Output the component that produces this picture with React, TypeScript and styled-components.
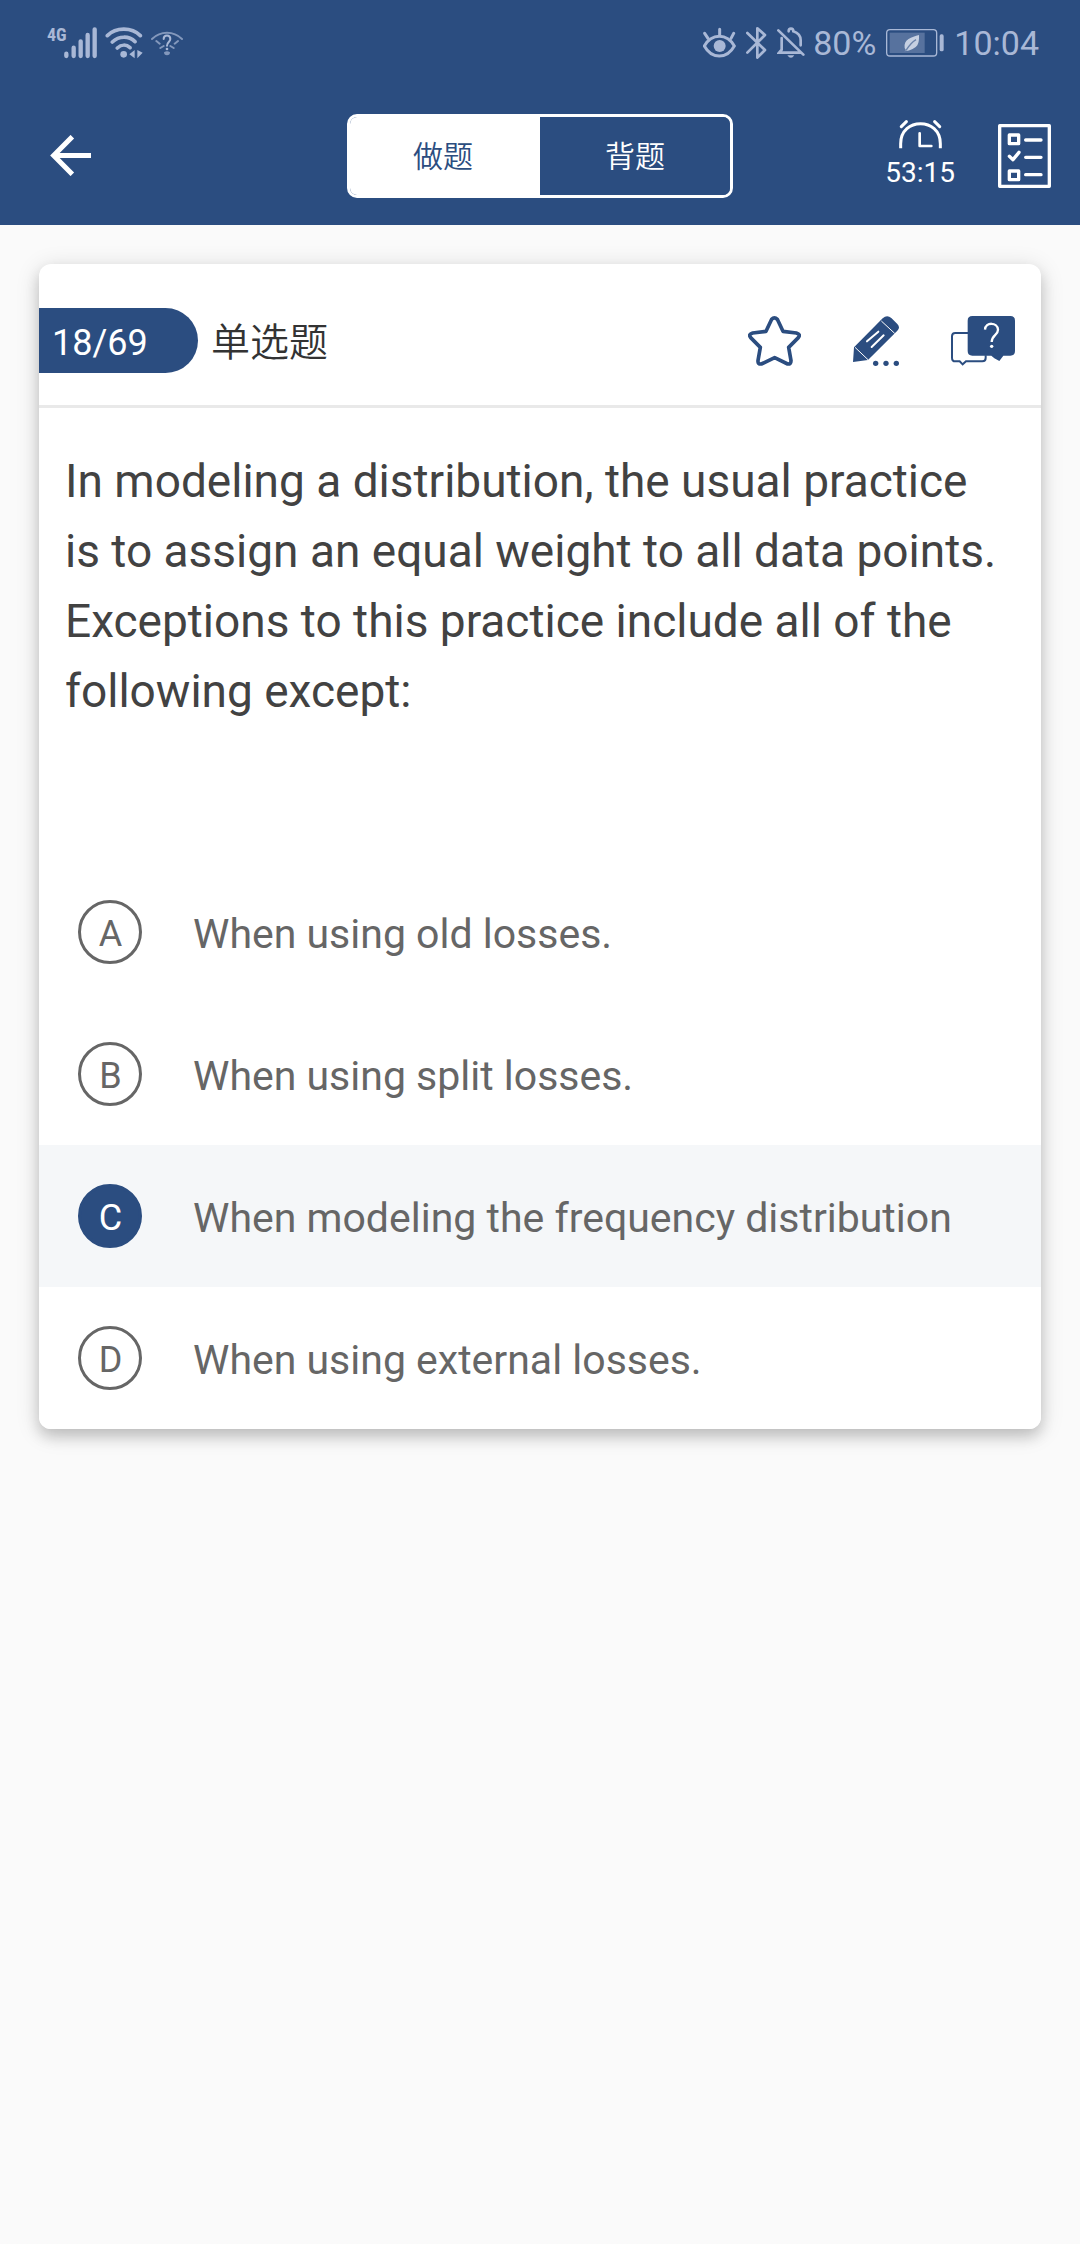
import React, { useState } from "react";
import styled, { createGlobalStyle } from "styled-components";

const navy = "#2b4d80";
const statusTint = "#a9b8d6";
const latin = 'Roboto, "Noto Sans CJK SC", sans-serif';

const GlobalStyle = createGlobalStyle`
  *, *::before, *::after { box-sizing: border-box; }
  body { margin: 0; background: #fafafa; font-family: ${latin}; }
  button { font: inherit; color: inherit; background: none; border: 0; padding: 0; cursor: pointer; }
  svg { display: block; flex: none; }
`;

const Header = styled.header`
  background: ${navy};
  color: #fff;
`;

const StatusBar = styled.div`
  display: flex;
  justify-content: space-between;
  align-items: center;
  height: 86px;
  padding: 0 41px 0 47px;
  color: ${statusTint};
  font-size: 34px;
  line-height: 40px;
`;

const StatusGroup = styled.div<{ $gap: number }>`
  display: flex;
  align-items: center;
  gap: ${(p) => p.$gap}px;
`;

const Signal = styled.div`
  display: flex;
  align-items: flex-start;
`;

const NetworkType = styled.span`
  width: 17px;
  font: 700 18px/16px "Roboto Condensed", "Liberation Sans Narrow", Roboto, sans-serif;
`;

const Toolbar = styled.nav`
  display: grid;
  grid-template-columns: 1fr auto 1fr;
  align-items: center;
  height: 139px;
  padding: 0 29px 0 50px;
`;

const BackButton = styled.button`
  justify-self: start;
`;

const Segments = styled.div`
  display: flex;
  height: 84px;
  margin-right: 21px;
  border: 3px solid #fff;
  border-radius: 10px;
  overflow: hidden;
`;

const Segment = styled.button<{ $active: boolean }>`
  width: 190px;
  padding-bottom: 4px;
  font-size: 30px;
  font-weight: 350;
  background: ${(p) => (p.$active ? "#fff" : navy)};
  color: ${(p) => (p.$active ? navy : "#fff")};

  &:first-child {
    padding-right: 4px;
  }
`;

const ToolbarEnd = styled.div`
  display: flex;
  justify-self: end;
  align-items: center;
  gap: 43px;
`;

const Timer = styled.div`
  display: flex;
  flex-direction: column;
  align-items: center;
  gap: 6px;
  font-size: 28px;
  line-height: 36px;
`;

const Card = styled.main`
  margin: 39px;
  border-radius: 12px;
  overflow: hidden;
  background: #fff;
  box-shadow: 0 8px 14px rgba(0, 0, 0, 0.16), 0 4px 24px rgba(0, 0, 0, 0.14);
`;

const CardHeader = styled.div`
  display: flex;
  align-items: center;
  padding: 44px 26px 32px 0;
  border-bottom: 3px solid #e9e9e9;
`;

const Counter = styled.span`
  width: 159px;
  padding: 5px 0 0 13px;
  border-radius: 0 33px 33px 0;
  background: ${navy};
  color: #fff;
  font-size: 36px;
  line-height: 60px;
`;

const QuestionType = styled.h1`
  flex: 1;
  margin: 0 0 0 13px;
  padding-top: 5px;
  color: #333;
  font-size: 39px;
  font-weight: 350;
  line-height: 60px;
`;

const CardActions = styled.div`
  display: flex;
  align-items: center;
  gap: 52px;
`;

const Question = styled.p`
  margin: 0;
  padding: 38px 38px 135px 26px;
  color: #424242;
  font-size: 46px;
  line-height: 70px;
`;

const Options = styled.div`
  display: flex;
  flex-direction: column;
`;

const Option = styled.label<{ $selected: boolean }>`
  display: flex;
  align-items: center;
  gap: 51px;
  min-height: 142px;
  padding: 0 39px;
  background: ${(p) => (p.$selected ? "#f5f7f9" : "#fff")};
  color: #666;
  font-size: 41px;
  line-height: 48px;
  cursor: pointer;
`;

const OptionText = styled.span`
  padding-top: 4px;
`;

const HiddenRadio = styled.input`
  position: absolute;
  opacity: 0;
  pointer-events: none;
`;

const Letter = styled.span<{ $selected: boolean }>`
  display: flex;
  flex: none;
  align-items: center;
  justify-content: center;
  width: 64px;
  height: 64px;
  padding: 4px 0 0 1px;
  border: 3px solid ${(p) => (p.$selected ? navy : "#666")};
  border-radius: 50%;
  background: ${(p) => (p.$selected ? navy : "transparent")};
  color: ${(p) => (p.$selected ? "#fff" : "#666")};
  font-size: 36px;
`;

const SignalIcon = () => (
  <svg width="33" height="32" viewBox="193 79 99 96" stroke="currentColor" strokeWidth="13" strokeLinecap="round">
    <path d="M200 159v7M222 141v25M243 122v44M264 103v63M285 86v80" />
  </svg>
);

const WifiIcon = () => (
  <svg width="38" height="32" viewBox="318 79 114 96" fill="none" stroke="currentColor" strokeWidth="11" strokeLinecap="round">
    <path d="M325 105C351 79 398 79 424 105M340 124C360 105 390 105 408 123M355 142C367 131 382 131 393 141" />
    <circle cx="374" cy="161" r="10" fill="currentColor" stroke="none" />
    <path d="M407 148v25l-16-12zM415 148v25l16-17z" fill="currentColor" stroke="none" />
  </svg>
);

const WifiUnknownIcon = () => (
  <svg width="32" height="32" viewBox="456 79 96 96" fill="none" stroke="currentColor" strokeLinecap="round">
    <g opacity="0.7" strokeWidth="6">
      <path d="M459 115C485 90 523 90 549 115M472 121l10 8M537 121l-10 8M484 142l10-6M524 142l-10-6" />
      <path d="M495 155a9 9 0 1 0 18 0q-9-6-18 0z" fill="currentColor" stroke="none" />
    </g>
    <path d="M494 115c0-14 20-14 20 0c0 9-10 9-10 20" strokeWidth="6" />
    <circle cx="504" cy="145" r="4" fill="currentColor" stroke="none" />
  </svg>
);

const EyeIcon = () => (
  <svg width="33" height="32" viewBox="66 79 99 96" fill="none" stroke="currentColor" strokeWidth="9" strokeLinecap="round">
    <path d="M70 136C92 97 138 97 160 136C138 176 92 176 70 136z" />
    <path d="M116 86v16M71 98l10 15M158 98l-8 15" />
    <circle cx="116" cy="136" r="18" fill="currentColor" stroke="none" />
  </svg>
);

const BluetoothIcon = () => (
  <svg width="21" height="32" viewBox="199 78 63 96" fill="none" stroke="currentColor" strokeWidth="8" strokeLinejoin="round" strokeLinecap="round">
    <path d="M203 96l53 51l-23 23V82l23 20l-53 53" />
  </svg>
);

const BellOffIcon = () => (
  <svg width="28" height="32" viewBox="297 79 84 96" fill="none" stroke="currentColor" strokeWidth="8" strokeLinecap="round">
    <path d="M301 89l75 73M311 112v35l-8 9h65M332 92c0-11 14-11 14 0c15 5 22 14 22 27v15" />
    <path d="M328 164h21q-10 15-21 0z" fill="currentColor" stroke="none" />
  </svg>
);

const BatteryIcon = () => (
  <svg width="58" height="28" viewBox="618 86 174 84">
    <rect x="620" y="88" width="150" height="79" rx="10" fill="none" stroke="currentColor" strokeWidth="4" />
    <rect x="629" y="97" width="105" height="61" fill="currentColor" opacity="0.35" />
    <rect x="779" y="102" width="12" height="51" rx="5" fill="currentColor" />
    <path d="M717 104c-22 6-47 13-43 39q2 5 5 7l-6 3q30-4 39-18q6-10 5-31z" fill="#c6d0e2" />
    <path d="M678 150q14-22 30-32" fill="none" stroke="#6b83aa" strokeWidth="4" />
  </svg>
);

const BackIcon = () => (
  <svg width="41" height="41" viewBox="149 403 123 123" fill="none" stroke="#fff" strokeWidth="15">
    <path d="M272 464.500H160M216 408l-56 56.500l56 56.500" />
  </svg>
);

const ClockIcon = () => (
  <svg width="43" height="29" viewBox="117 86 129 87" fill="none" stroke="#fff" strokeLinecap="round" strokeLinejoin="round">
    <path d="M122 171v-14C122 77 241 77 241 157v14" strokeWidth="9" strokeLinecap="butt" />
    <path d="M179 126v38h35" strokeWidth="8" />
    <path d="M124 106l15-15M239 106l-15-15" strokeWidth="9" />
  </svg>
);

const SheetIcon = () => (
  <svg width="53" height="64" viewBox="414 98 159 192" fill="none" stroke="#fff" strokeWidth="10" strokeLinejoin="round">
    <rect x="419" y="103" width="149" height="182" />
    <rect x="448" y="131" width="28" height="26" />
    <rect x="448" y="239" width="28" height="26" />
    <path d="M448 195l11 10l18-22M497 146h46M497 198h46M497 250h46" strokeLinecap="round" />
  </svg>
);

const StarIcon = () => (
  <svg width="53" height="50" viewBox="84 78 159 150" fill="none" stroke={navy} strokeWidth="11" strokeLinejoin="round">
    <path d="M155 88Q163 79 172 88L189 124L229 129Q243 133 235 143L206 172L213 212Q213 223 203 222L164 203L124 222Q113 223 114 212L121 172L92 143Q84 133 98 129L138 124z" />
  </svg>
);

const PencilIcon = () => (
  <svg width="46" height="50" viewBox="399 78 138 150">
    <path d="M399 216L402 172L488 85Q501 73 514 84L532 102Q542 113 532 122L444 210z" fill={navy} />
    <path d="M484 93l40 37M405 172l40 38" stroke="#fff" strokeWidth="3" />
    <path d="M441 154l34-29M455 171l36-35" stroke="#fff" strokeWidth="6" strokeLinecap="round" />
    <g fill={navy}>
      <circle cx="467" cy="220" r="8" />
      <circle cx="498" cy="220" r="8" />
      <circle cx="529" cy="220" r="8" />
    </g>
  </svg>
);

const HelpIcon = () => (
  <svg width="64" height="50" viewBox="693 78 192 150" fill="none">
    <path d="M744 129H706Q696 129 696 139V203Q696 214 706 214H719L728 223L738 214H787Q797 214 797 204V196" stroke={navy} strokeWidth="6" />
    <path d="M757 78H871Q885 78 885 92V183Q885 197 871 197H850L838 213L823 205L814 197H757Q743 197 743 183V92Q743 78 757 78z" fill={navy} />
    <path d="M795 119C796 95 833 96 834 119C834 136 815 135 815 156" stroke="#fff" strokeWidth="7" />
    <circle cx="815" cy="169" r="5" fill="#fff" />
  </svg>
);

const modes = ["做题", "背题"];

const options = [
  { letter: "A", text: "When using old losses." },
  { letter: "B", text: "When using split losses." },
  { letter: "C", text: "When modeling the frequency distribution" },
  { letter: "D", text: "When using external losses." },
];

export default function App() {
  const [mode, setMode] = useState("做题");
  const [answer, setAnswer] = useState("C");

  return (
    <>
      <GlobalStyle />
      <Header>
        <StatusBar>
          <StatusGroup $gap={8}>
            <Signal>
              <NetworkType>4G</NetworkType>
              <SignalIcon />
            </Signal>
            <WifiIcon />
            <WifiUnknownIcon />
          </StatusGroup>
          <StatusGroup $gap={10}>
            <EyeIcon />
            <BluetoothIcon />
            <StatusGroup $gap={8}>
              <BellOffIcon />
              <span>80%</span>
            </StatusGroup>
            <BatteryIcon />
            <span>10:04</span>
          </StatusGroup>
        </StatusBar>
        <Toolbar>
          <BackButton type="button" aria-label="返回">
            <BackIcon />
          </BackButton>
          <Segments>
            {modes.map((m) => (
              <Segment key={m} type="button" $active={m === mode} aria-pressed={m === mode} onClick={() => setMode(m)}>
                {m}
              </Segment>
            ))}
          </Segments>
          <ToolbarEnd>
            <Timer>
              <ClockIcon />
              <span>53:15</span>
            </Timer>
            <button type="button" aria-label="答题卡">
              <SheetIcon />
            </button>
          </ToolbarEnd>
        </Toolbar>
      </Header>
      <Card>
        <CardHeader>
          <Counter>18/69</Counter>
          <QuestionType>单选题</QuestionType>
          <CardActions>
            <button type="button" aria-label="收藏">
              <StarIcon />
            </button>
            <button type="button" aria-label="笔记">
              <PencilIcon />
            </button>
            <button type="button" aria-label="提问">
              <HelpIcon />
            </button>
          </CardActions>
        </CardHeader>
        <Question id="question">
          In modeling a distribution, the usual practice is to assign an equal weight to all data points. Exceptions to
          this practice include all of the following except:
        </Question>
        <Options role="radiogroup" aria-labelledby="question">
          {options.map(({ letter, text }) => (
            <Option key={letter} $selected={letter === answer}>
              <HiddenRadio
                type="radio"
                name="answer"
                value={letter}
                checked={letter === answer}
                onChange={() => setAnswer(letter)}
              />
              <Letter $selected={letter === answer}>{letter}</Letter>
              <OptionText>{text}</OptionText>
            </Option>
          ))}
        </Options>
      </Card>
    </>
  );
}
